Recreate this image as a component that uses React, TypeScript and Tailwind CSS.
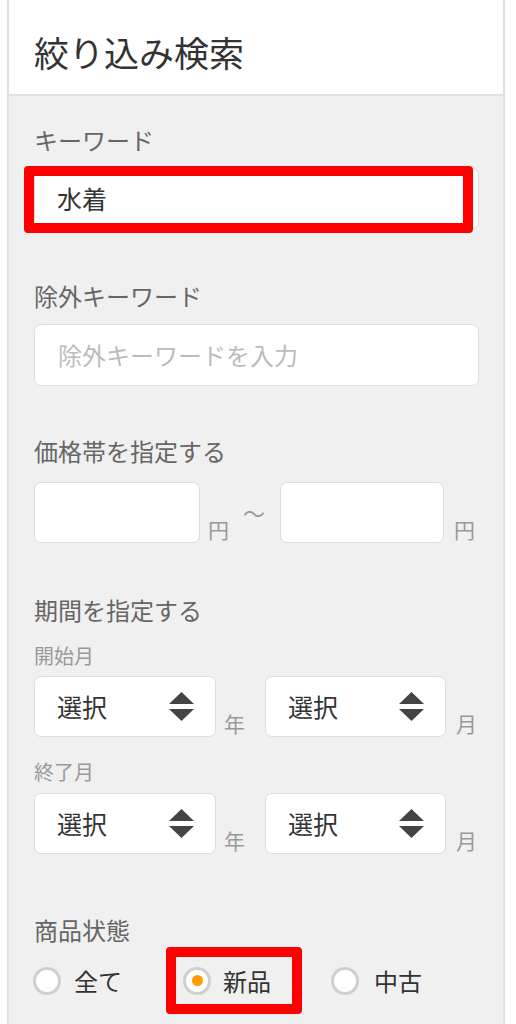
const font = { fontFamily: '"Noto Sans CJK JP", "Noto Sans", sans-serif' };

function Label({ children }: { children: React.ReactNode }) {
  return <div className="text-[24px] leading-[24px] text-[#666]">{children}</div>;
}

function SubLabel({ children }: { children: React.ReactNode }) {
  return <div className="text-[20px] leading-[20px] text-[#999]">{children}</div>;
}

function Unit({ children }: { children: React.ReactNode }) {
  return <span className="pb-[2px] text-[21px] leading-[22px] text-[#999]">{children}</span>;
}

function SortArrows() {
  return (
    <svg width="25" height="30" viewBox="0 0 25 30" className="shrink-0">
      <polygon points="12.5,0 25,12 0,12" fill="#444" />
      <polygon points="0,17 25,17 12.5,29" fill="#444" />
    </svg>
  );
}

function Select({ width }: { width: string }) {
  return (
    <div
      className={`flex h-[61px] items-center justify-between rounded-[7px] border border-[#ddd] bg-white pl-[22px] pr-[21px] ${width}`}
    >
      <span className="text-[25px] leading-none text-[#333]">選択</span>
      <SortArrows />
    </div>
  );
}

function DateRow() {
  return (
    <div className="flex items-end">
      <Select width="w-[182px]" />
      <span className="ml-[8px] w-[41px]">
        <Unit>年</Unit>
      </span>
      <Select width="w-[181px]" />
      <span className="ml-[10px]">
        <Unit>月</Unit>
      </span>
    </div>
  );
}

function Radio({ checked }: { checked?: boolean }) {
  return (
    <span className="flex h-[28px] w-[28px] shrink-0 items-center justify-center rounded-full border-[3px] border-[#cfcfd2] bg-white">
      {checked && <span className="h-[11px] w-[11px] rounded-full bg-[#ff9c00]" />}
    </span>
  );
}

export default function App() {
  return (
    <div className="min-h-screen bg-white" style={font}>
      <div className="ml-[7px] w-[498px] border-x-2 border-[#e0e0e0]">
        <div className="flex h-[96px] items-center border-b-2 border-[#e0e0e0] bg-white pl-[25px] pt-[8px]">
          <h1 className="text-[35px] font-normal leading-none text-[#333]">絞り込み検索</h1>
        </div>

        <div className="bg-[#f0f0f0] pb-[20px] pl-[25px] pr-[24px] pt-[32px]">
          <Label>キーワード</Label>
          <div className="relative mt-[16px]">
            <div className="flex h-[61px] items-center rounded-[7px] border border-[#ddd] bg-white pl-[22px] text-[25px] text-[#333]">
              水着
            </div>
            <div className="absolute -left-[10px] -top-[2px] h-[67px] w-[449px] rounded-[4px] border-[10px] border-[#ff0000]" />
          </div>

          <div className="mt-[55px]">
            <Label>除外キーワード</Label>
          </div>
          <div className="mt-[16px] flex h-[62px] items-center rounded-[7px] border border-[#ddd] bg-white pl-[23px] text-[24px] text-[#bbb]">
            除外キーワードを入力
          </div>

          <div className="mt-[53px]">
            <Label>価格帯を指定する</Label>
          </div>
          <div className="mt-[19px] flex items-end">
            <div className="h-[61px] w-[166px] rounded-[7px] border border-[#ddd] bg-white" />
            <span className="ml-[8px]">
              <Unit>円</Unit>
            </span>
            <span className="mb-[20px] ml-[14px] w-[37px] text-[22px] leading-[22px] text-[#999]">〜</span>
            <div className="h-[61px] w-[164px] rounded-[7px] border border-[#ddd] bg-white" />
            <span className="ml-[10px]">
              <Unit>円</Unit>
            </span>
          </div>

          <div className="mt-[55px]">
            <Label>期間を指定する</Label>
          </div>
          <div className="mt-[24px]">
            <SubLabel>開始月</SubLabel>
          </div>
          <div className="mt-[10px]">
            <DateRow />
          </div>
          <div className="mt-[25px]">
            <SubLabel>終了月</SubLabel>
          </div>
          <div className="mt-[11px]">
            <DateRow />
          </div>

          <div className="mt-[64px]">
            <Label>商品状態</Label>
          </div>
          <div className="mt-[5px] flex items-center">
            <div className="-ml-px flex w-[133px] items-center gap-[13px]">
              <Radio />
              <span className="text-[24px] leading-none text-[#333]">全て</span>
            </div>
            <div className="flex h-[67px] w-[136px] items-center gap-[12px] rounded-[4px] border-[10px] border-[#ff0000] pl-[7px]">
              <Radio checked />
              <span className="text-[24px] leading-none text-[#333]">新品</span>
            </div>
            <div className="ml-[29px] flex items-center gap-[15px]">
              <Radio />
              <span className="text-[24px] leading-none text-[#333]">中古</span>
            </div>
          </div>
        </div>
      </div>
    </div>
  );
}
